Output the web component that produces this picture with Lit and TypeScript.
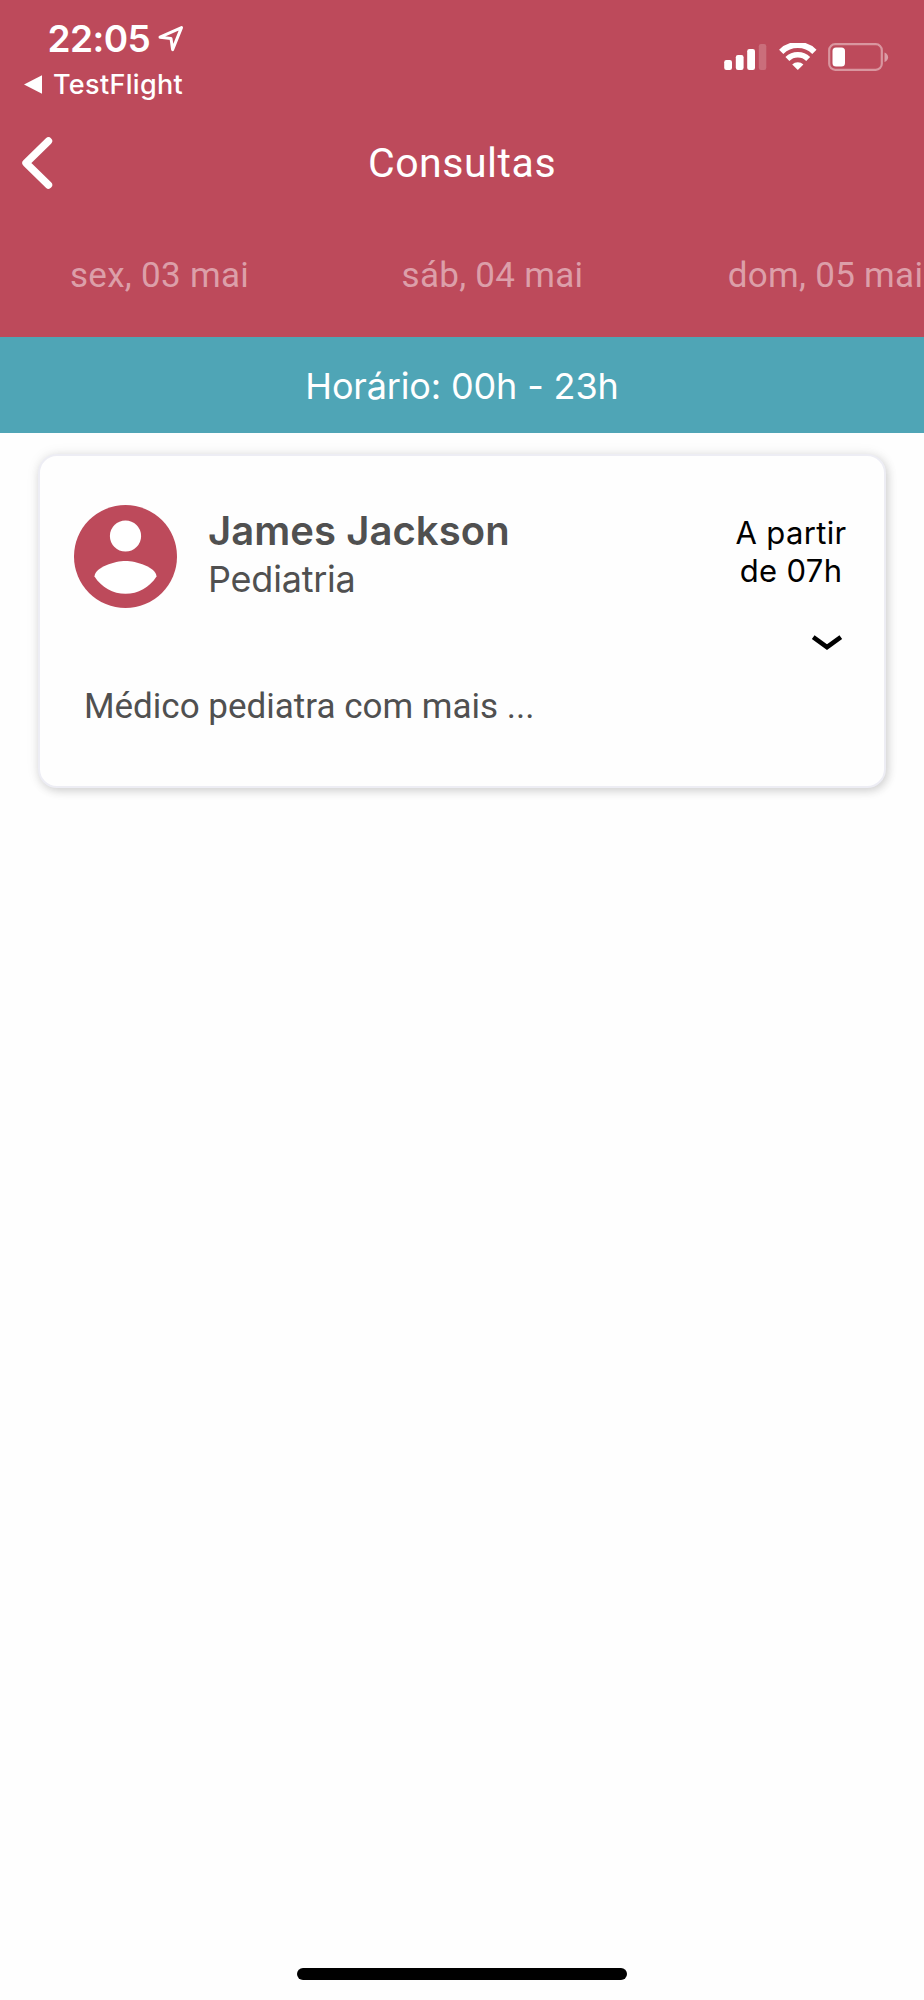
import { LitElement, html, css } from "lit";
import { customElement } from "lit/decorators.js";

@customElement("status-bar")
class StatusBar extends LitElement {
  static styles = css`
    :host { display: flex; justify-content: space-between; align-items: flex-start; height: 119px; padding: 19px 34px 0 24px; box-sizing: border-box; color: #fff; }
    .left { display: flex; flex-direction: column; gap: 10px; }
    .clock { display: flex; align-items: flex-start; padding-left: 23.5px; font: 600 37px/40px Inter, sans-serif; letter-spacing: -0.55px; }
    .location { margin: 6px 0 0 7.5px; }
    .back-app { display: flex; align-items: flex-start; gap: 11px; font: 500 27px/32px Inter, sans-serif; letter-spacing: 0.32px; }
    .triangle { margin-top: 6px; }
    svg { display: block; }
    .icons { display: flex; align-items: flex-start; padding-top: 24px; }
    .wifi { margin-left: 12px; }
    .battery { margin-left: 11px; margin-right: 1px; }
  `;
  render() {
    return html`
      <div class="left">
        <div class="clock">
          <span>22:05</span>
          <svg class="location" width="26" height="28" viewBox="0 0 26 28">
            <path d="M2 12.2 L23.5 2.6 L14.6 24.6 L13 13.4 Z" fill="none" stroke="#fff" stroke-width="3" stroke-linejoin="round" />
          </svg>
        </div>
        <div class="back-app">
          <svg class="triangle" width="18" height="19" viewBox="0 0 18 19"><path d="M0 9.5 L18 0.3 V18.7 Z" fill="#fff" /></svg>
          <span>TestFlight</span>
        </div>
      </div>
      <div class="icons">
        <svg width="43" height="28" viewBox="0 0 43 28" fill="#fff">
          <rect x="0.2" y="17" width="7.8" height="10" rx="2.2" />
          <rect x="11.8" y="12" width="7.8" height="15" rx="2.2" />
          <rect x="23.2" y="6" width="7.8" height="21" rx="2.2" />
          <rect x="34.8" y="1" width="7.5" height="26" rx="2.2" opacity="0.2" />
        </svg>
        <svg class="wifi" width="38" height="28" viewBox="0 0 38 28">
          <path d="M2.2 8.8 A23.5 23.5 0 0 1 35.4 8.8" fill="none" stroke="#fff" stroke-width="6" />
          <path d="M8.4 16 A14.8 14.8 0 0 1 29.2 16" fill="none" stroke="#fff" stroke-width="5.6" />
          <path d="M18.8 27 L13.2 21.6 A8 8 0 0 1 24.4 21.6 Z" fill="#fff" />
        </svg>
        <svg class="battery" width="61" height="28" viewBox="0 0 61 28">
          <rect x="1.2" y="1.2" width="52.6" height="25.6" rx="6" fill="none" stroke="#fff" stroke-opacity="0.42" stroke-width="2.2" />
          <rect x="4.5" y="4.5" width="12.5" height="19" rx="3.5" fill="#fff" />
          <path d="M56.5 9.5 C61.3 11.3 61.3 17.2 56.5 19 Z" fill="#fff" opacity="0.45" />
        </svg>
      </div>
    `;
  }
}

@customElement("app-header")
class AppHeader extends LitElement {
  static styles = css`
    :host { display: block; height: 337px; background: #bd4a5b; overflow: hidden; }
    .nav { display: grid; grid-template-columns: 60px 1fr 60px; align-items: center; height: 88px; color: #fff; }
    .chevron { display: block; margin-left: 19.5px; }
    .title { text-align: center; font: 400 41px/60px Roboto, sans-serif; letter-spacing: 0.54px; }
    .dates { display: flex; margin: 39px 0 0 -7px; }
    .date { flex: 0 0 333px; text-align: center; font: 400 35px/60px Roboto, sans-serif; letter-spacing: 0.3px; color: #dc9fa9; white-space: nowrap; }
  `;
  render() {
    return html`
      <status-bar></status-bar>
      <div class="nav">
        <svg class="chevron" width="34" height="54" viewBox="0 0 34 54">
          <path d="M28.5 5 L6 27 L28.5 49" fill="none" stroke="#fff" stroke-width="7.4" stroke-linecap="round" stroke-linejoin="round" />
        </svg>
        <div class="title">Consultas</div>
      </div>
      <div class="dates">
        ${["sex, 03 mai", "sáb, 04 mai", "dom, 05 mai"].map((d) => html`<div class="date">${d}</div>`)}
      </div>
    `;
  }
}

@customElement("doctor-card")
class DoctorCard extends LitElement {
  static styles = css`
    :host { display: block; box-sizing: border-box; height: 334px; padding: 49px 37px 0 34px; background: #fefefe; border: 2px solid #ededf4; border-radius: 19px; box-shadow: 2px 3px 10px rgba(0, 0, 0, 0.15), 0 0 14px rgba(0, 0, 0, 0.07); color: #505050; }
    .top { display: flex; align-items: flex-start; }
    .avatar { display: block; flex: none; }
    .who { flex: 1; padding: 1px 0 0 31px; }
    .name { font: 600 40px/49px Inter, sans-serif; letter-spacing: 0.06px; }
    .specialty { padding-top: 1px; font: 400 36px/46px Inter, sans-serif; letter-spacing: -0.22px; }
    .hours { width: 112px; padding-top: 9px; text-align: center; white-space: nowrap; font: 400 31px/38px Inter, sans-serif; letter-spacing: 0.35px; color: #000; }
    .expand { display: flex; justify-content: flex-end; padding: 27px 4px 0 0; }
    .about { padding: 34px 0 0 10px; font: 400 35px/44px Roboto, sans-serif; }
  `;
  render() {
    return html`
      <div class="top">
        <svg class="avatar" width="103" height="103" viewBox="0 0 103 103">
          <circle cx="51.5" cy="51.5" r="51.5" fill="#bd4a5b" />
          <circle cx="51.5" cy="31" r="15.6" fill="#fff" />
          <path d="M20.5 71.5 C21 62 41 56 51.5 56 C62 56 82 62 82.5 71.5 C75.5 82.5 64 88.8 51.5 88.8 C39 88.8 27.5 82.5 20.5 71.5 Z" fill="#fff" />
        </svg>
        <div class="who">
          <div class="name">James Jackson</div>
          <div class="specialty">Pediatria</div>
        </div>
        <div class="hours">A partir<br />de 07h</div>
      </div>
      <div class="expand">
        <svg width="32" height="16" viewBox="0 0 32 16"><path d="M2.2 2.2 L16 12.2 L29.8 2.2" fill="none" stroke="#000" stroke-width="4.6" /></svg>
      </div>
      <div class="about">Médico pediatra com mais ...</div>
    `;
  }
}

@customElement("app-root")
class AppRoot extends LitElement {
  static styles = css`
    :host { display: flex; flex-direction: column; width: 924px; height: 2000px; overflow: hidden; background: #fefefe; }
    .schedule { box-sizing: border-box; height: 96px; padding-top: 2px; text-align: center; font: 400 36px/94px Inter, sans-serif; letter-spacing: -0.15px; color: #fff; background: #4fa5b6; }
    .list { flex: 1; padding: 21px 38px 0 38px; }
    .home { width: 330px; height: 12px; margin: 0 auto 20px; border-radius: 6px; background: #000; }
  `;
  render() {
    return html`
      <app-header></app-header>
      <div class="schedule">Horário: 00h - 23h</div>
      <div class="list"><doctor-card></doctor-card></div>
      <div class="home"></div>
    `;
  }
}
